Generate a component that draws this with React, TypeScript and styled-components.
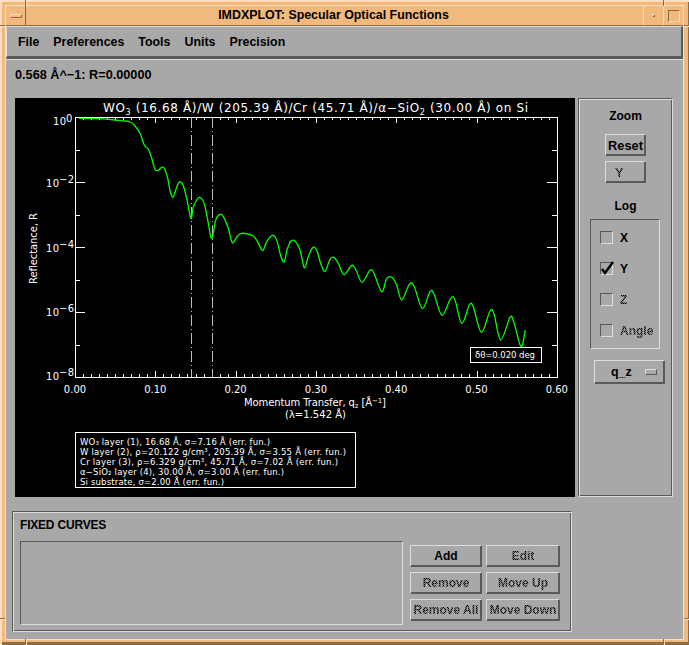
import styled, { createGlobalStyle } from "styled-components";

const GRAY = "#a8a8a8";
const LIGHT = "#dcdcdc";
const DARK = "#5a5a5a";
const ORANGE = "#f0b97e";
const ORANGE_LIGHT = "#ffdfbb";
const ORANGE_DARK = "#8c6b47";

const GlobalStyle = createGlobalStyle`
  html, body {
    margin: 0;
    padding: 0;
    background: ${GRAY};
  }
  * {
    box-sizing: border-box;
  }
`;

const Frame = styled.div`
  position: relative;
  width: 689px;
  height: 645px;
  padding: 5px;
  background: ${ORANGE};
  box-shadow: inset 2px 2px 0 ${ORANGE_LIGHT}, inset -1px -3px 0 ${ORANGE_DARK};
  font-family: "Liberation Sans", Arial, sans-serif;
  font-weight: 700;
  font-size: 12.4px;
  color: #000;
`;

const Notch = styled.div<{ $x: number; $y: number; $wide?: boolean }>`
  position: absolute;
  left: ${(p) => p.$x}px;
  top: ${(p) => p.$y}px;
  width: ${(p) => (p.$wide ? "5px" : "2px")};
  height: ${(p) => (p.$wide ? "2px" : "6px")};
  background: ${(p) =>
    p.$wide
      ? `linear-gradient(${ORANGE_DARK} 50%, ${ORANGE_LIGHT} 50%)`
      : `linear-gradient(90deg, ${ORANGE_DARK} 50%, ${ORANGE_LIGHT} 50%)`};
`;

const Window = styled.div`
  height: 100%;
  border: 1px solid ${ORANGE_LIGHT};
  display: flex;
  flex-direction: column;
`;

const TitleBar = styled.div`
  height: 20px;
  display: flex;
  flex-shrink: 0;
  border-bottom: 1px solid ${ORANGE_DARK};
`;

const WmButton = styled.div<{ $w: number }>`
  width: ${(p) => p.$w}px;
  display: flex;
  align-items: center;
  justify-content: center;
  flex-shrink: 0;
  border-left: 1px solid ${ORANGE_LIGHT};
  &:first-child {
    border-left: 0;
    border-right: 1px solid ${ORANGE_DARK};
  }
`;

const MenuGlyph = styled.div`
  width: 12px;
  height: 4px;
  background: ${ORANGE};
  border: 1px solid;
  border-color: ${ORANGE_LIGHT} ${ORANGE_DARK} ${ORANGE_DARK} ${ORANGE_LIGHT};
`;

const MinGlyph = styled.div`
  width: 3px;
  height: 3px;
  border: 1px solid;
  border-color: ${ORANGE_LIGHT} ${ORANGE_DARK} ${ORANGE_DARK} ${ORANGE_LIGHT};
`;

const MaxGlyph = styled.div`
  width: 12px;
  height: 12px;
  border: 1px solid;
  border-color: ${ORANGE_DARK} ${ORANGE_LIGHT} ${ORANGE_LIGHT} ${ORANGE_DARK};
`;

const TitleText = styled.div`
  flex: 1;
  text-align: center;
  line-height: 19px;
  padding-right: 2px;
`;

const Body = styled.div`
  flex: 1;
  background: ${GRAY};
  display: flex;
  flex-direction: column;
`;

const MenuBar = styled.div`
  height: 33px;
  flex-shrink: 0;
  display: flex;
  align-items: center;
  gap: 14px;
  padding-left: 11px;
  border-top: 1px solid ${LIGHT};
  border-left: 1px solid ${LIGHT};
  border-bottom: 3px solid ${DARK};
  border-right: 2px solid ${DARK};
`;

const Readout = styled.div`
  height: 39px;
  flex-shrink: 0;
  display: flex;
  align-items: center;
  padding: 0 0 8px 9px;
  font-size: 12.7px;
  border-top: 1px solid ${LIGHT};
`;

const MainRow = styled.div`
  display: flex;
  gap: 3px;
  height: 399px;
  margin-left: 9px;
  flex-shrink: 0;
`;

const Plot = styled.svg`
  display: block;
  width: 560px;
  height: 399px;
  background: #000;
  flex-shrink: 0;
`;

const PlotText = styled.text<{ $size?: number }>`
  fill: #fff;
  font-family: "DejaVu Sans", sans-serif;
  font-weight: 400;
  font-size: ${(p) => p.$size ?? 10}px;
`;

const Etched = styled.div`
  border: 1px solid;
  border-color: ${DARK} ${LIGHT} ${LIGHT} ${DARK};
  box-shadow: inset 1px 1px 0 ${LIGHT}, inset -1px -1px 0 ${DARK};
`;

const SidePanel = styled(Etched)`
  width: 95px;
  display: flex;
  flex-direction: column;
  align-items: center;
  padding-top: 9px;
`;

const SideLabel = styled.div<{ $top?: number }>`
  height: 16px;
  line-height: 16px;
  font-size: 12px;
  margin-top: ${(p) => p.$top ?? 0}px;
`;

const Button = styled.div<{ $w: number; $top?: number; $left?: boolean }>`
  width: ${(p) => p.$w}px;
  height: 22px;
  margin-top: ${(p) => p.$top ?? 0}px;
  display: flex;
  align-items: center;
  justify-content: ${(p) => (p.$left ? "flex-start" : "center")};
  padding-left: ${(p) => (p.$left ? "9px" : "0")};
  overflow: hidden;
  white-space: nowrap;
  flex-shrink: 0;
  border: 1px solid;
  border-color: ${LIGHT} ${DARK} ${DARK} ${LIGHT};
  box-shadow: inset -1px -1px 0 ${DARK};
`;

const SideButton = styled(Button)`
  font-size: 12.8px;
`;

const Dim = styled.span`
  color: transparent;
  background: repeating-conic-gradient(#000 0 25%, #6e6e6e 0 50%) 0 0 / 2px 2px;
  -webkit-background-clip: text;
  background-clip: text;
`;

const LogBox = styled.div`
  width: 70px;
  height: 130px;
  margin: 5px 1px 0 0;
  padding: 2px 0 0 9px;
  flex-shrink: 0;
  font-size: 12px;
  border: 1px solid;
  border-color: ${DARK} ${LIGHT} ${LIGHT} ${DARK};
`;

const LogRow = styled.div`
  height: 31px;
  display: flex;
  align-items: center;
  gap: 7px;
`;

const CheckBox = styled.div`
  position: relative;
  width: 13px;
  height: 13px;
  border: 1px solid;
  border-color: ${DARK} ${LIGHT} ${LIGHT} ${DARK};
`;

const CheckMark = styled.svg`
  position: absolute;
  left: -1px;
  top: -2px;
  width: 14px;
  height: 14px;
`;

const Select = styled.div`
  width: 71px;
  height: 24px;
  margin: 11px 0 0 8px;
  flex-shrink: 0;
  display: flex;
  align-items: center;
  padding-left: 16px;
  gap: 13px;
  border: 1px solid;
  border-color: ${LIGHT} ${DARK} ${DARK} ${LIGHT};
  box-shadow: inset -1px -1px 0 ${DARK};
`;

const SelectGlyph = styled.div`
  width: 12px;
  height: 6px;
  border: 1px solid;
  border-color: ${LIGHT} ${DARK} ${DARK} ${LIGHT};
`;

const CurvesPanel = styled(Etched)`
  width: 560px;
  height: 121px;
  margin: 14px 0 0 6px;
  padding: 1px 7px;
  flex-shrink: 0;
`;

const CurvesTitle = styled.div`
  height: 28px;
  line-height: 24px;
  font-size: 12px;
  letter-spacing: -0.2px;
`;

const CurvesRow = styled.div`
  display: flex;
  gap: 7px;
`;

const ListBox = styled.div`
  width: 383px;
  height: 84px;
  border: 1px solid;
  border-color: ${DARK} ${LIGHT} ${LIGHT} ${DARK};
`;

const ButtonGrid = styled.div`
  display: grid;
  grid-template-columns: 72px 74px;
  grid-auto-rows: 22px;
  column-gap: 4px;
  row-gap: 5px;
  margin-top: 4px;
  font-size: 12px;
`;

const LEFT = 75;
const RIGHT = 557;
const TOP = 117;
const BOTTOM = 377;
const X_STEP = (RIGHT - LEFT) / 60;
const DECADE = (BOTTOM - TOP) / 8;

const zoomA = [
  [192, 55], [250, 56], [300, 60], [345, 66], [360, 78], [375, 100], [388, 135], [400, 148], [410, 175],
  [420, 208], [430, 211], [440, 202], [448, 205], [458, 235], [466, 275], [474, 292], [482, 270], [490, 250],
  [498, 246], [506, 260], [516, 300], [528, 355], [534, 325], [545, 300], [555, 292], [568, 312], [578, 360],
  [588, 412], [594, 405], [602, 360], [615, 343], [625, 350], [640, 385], [652, 428], [665, 412], [680, 400],
  [715, 408], [730, 430], [743, 452], [755, 425], [772, 406], [785, 420], [798, 470], [808, 485], [816, 450],
  [826, 425],
];

const zoomB = [
  [0, 127], [12, 121], [30, 150], [43, 203], [55, 170], [68, 143], [80, 150], [92, 190], [105, 214], [120, 178],
  [132, 172], [145, 190], [162, 224], [185, 196], [198, 210], [216, 247], [240, 211], [252, 220], [275, 275],
  [290, 236], [305, 232], [320, 255], [335, 300], [358, 253], [372, 258], [397, 325], [420, 275], [432, 282],
  [456, 346], [482, 295], [495, 300], [515, 370], [538, 315], [550, 320], [574, 397], [600, 333], [612, 342],
  [632, 420], [660, 352], [672, 368], [693, 440], [706, 390],
];

const curvePoints = [
  ...zoomA.map(([x, y]) => [15 + x / 3, 100 + y / 3]),
  ...zoomB.map(([x, y]) => [290 + x / 3, 200 + y / 3]),
];

// catmull-rom through the traced points, so the humps come out round
const smoothPath = (pts: number[][]) => {
  let d = `M${pts[0][0].toFixed(1)} ${pts[0][1].toFixed(1)}`;
  for (let i = 0; i < pts.length - 1; i++) {
    const p0 = pts[Math.max(i - 1, 0)];
    const p1 = pts[i];
    const p2 = pts[i + 1];
    const p3 = pts[Math.min(i + 2, pts.length - 1)];
    const c1x = p1[0] + (p2[0] - p0[0]) / 6;
    const c1y = p1[1] + (p2[1] - p0[1]) / 6;
    const c2x = p2[0] - (p3[0] - p1[0]) / 6;
    const c2y = p2[1] - (p3[1] - p1[1]) / 6;
    d += `C${c1x.toFixed(1)} ${c1y.toFixed(1)} ${c2x.toFixed(1)} ${c2y.toFixed(1)} ${p2[0].toFixed(1)} ${p2[1].toFixed(1)}`;
  }
  return d;
};

const layerLines = [
  { y: 445, w: 190, text: "WO₃ layer (1), 16.68 Å, σ=7.16 Å (err. fun.)" },
  { y: 455, w: 266, text: "W layer (2), ρ=20.122 g/cm³, 205.39 Å, σ=3.55 Å (err. fun.)" },
  { y: 465, w: 258, text: "Cr layer (3), ρ=6.329 g/cm³, 45.71 Å, σ=7.02 Å (err. fun.)" },
  { y: 475, w: 204, text: "α−SiO₂ layer (4), 30.00 Å, σ=3.00 Å (err. fun.)" },
  { y: 485, w: 144, text: "Si substrate, σ=2.00 Å (err. fun.)" },
];

const Chart = () => {
  const xTicks = Array.from({ length: 61 }, (_, i) => i);
  const yTicks = Array.from({ length: 9 }, (_, i) => i);
  return (
    <Plot viewBox="15 98 560 399">
      <g stroke="#fff" strokeWidth="1" fill="none" shapeRendering="crispEdges">
        <rect x={LEFT + 0.5} y={TOP + 0.5} width={RIGHT - LEFT} height={BOTTOM - TOP} />
        {xTicks.map((i) => {
          const x = Math.round(LEFT + i * X_STEP) + 0.5;
          const len = i % 10 === 0 ? 6 : 3;
          return (
            <g key={i}>
              <line x1={x} x2={x} y1={TOP} y2={TOP + len} />
              <line x1={x} x2={x} y1={BOTTOM} y2={BOTTOM - len} />
            </g>
          );
        })}
        {yTicks.map((i) => {
          const y = Math.round(TOP + i * DECADE) + 0.5;
          const len = i % 2 === 0 ? 10 : 5;
          return (
            <g key={i}>
              <line x1={LEFT} x2={LEFT + len} y1={y} y2={y} />
              <line x1={RIGHT} x2={RIGHT - len} y1={y} y2={y} />
            </g>
          );
        })}
        <rect x="470.5" y="347.5" width="71" height="15" fill="#000" />
        <rect x="75.5" y="432.5" width="280" height="55" />
      </g>
      <g stroke="#bdbdbd" strokeWidth="1" strokeDasharray="11 3 1 3" shapeRendering="crispEdges">
        <line x1="191.5" x2="191.5" y1={TOP} y2={BOTTOM} />
        <line x1="212.5" x2="212.5" y1={TOP} y2={BOTTOM} />
      </g>
      <path d={smoothPath(curvePoints)} fill="none" stroke="#00ff00" strokeWidth="1.3" />

      <PlotText x="103" y="112" $size={12} textLength={425}>
        WO<tspan dy="3" fontSize="8">3</tspan>
        <tspan dy="-3"> (16.68 Å)/W (205.39 Å)/Cr (45.71 Å)/α−SiO</tspan>
        <tspan dy="3" fontSize="8">2</tspan>
        <tspan dy="-3"> (30.00 Å) on Si</tspan>
      </PlotText>

      <PlotText x="53" y="125" textLength={13}>10</PlotText>
      <PlotText x="66" y="122" textLength={7}>0</PlotText>
      {[
        { y: 187, e: "−2" },
        { y: 252, e: "−4" },
        { y: 316, e: "−6" },
        { y: 380, e: "−8" },
      ].map((t) => (
        <g key={t.e}>
          <PlotText x="46" y={t.y} textLength={13}>10</PlotText>
          <PlotText x="59" y={t.y - 4} textLength={15}>{t.e}</PlotText>
        </g>
      ))}

      {[0, 1, 2, 3, 4, 5, 6].map((i) => (
        <PlotText key={i} x={LEFT + i * 80.3} y="393" textAnchor="middle">
          {`0.${i}0`}
        </PlotText>
      ))}

      <PlotText x="244" y="406" $size={10} textLength={142}>
        Momentum Transfer, q<tspan dy="2" fontSize="7">z</tspan>
        <tspan dy="-2"> [Å</tspan>
        <tspan dy="-3" fontSize="7">−1</tspan>
        <tspan dy="3">]</tspan>
      </PlotText>
      <PlotText x="285" y="418" $size={10} textLength={61}>(λ=1.542 Å)</PlotText>
      <PlotText transform="translate(37 284) rotate(-90)" $size={10} textLength={71}>Reflectance, R</PlotText>
      <PlotText x="475" y="358" $size={8.5} textLength={60}>δθ=0.020 deg</PlotText>

      {layerLines.map((l) => (
        <PlotText key={l.y} x="80" y={l.y} $size={8.5} textLength={l.w}>
          {l.text}
        </PlotText>
      ))}
    </Plot>
  );
};

const App = () => {
  return (
    <>
      <GlobalStyle />
      <Frame>
        <Notch $x={25} $y={0} />
        <Notch $x={663} $y={0} />
        <Notch $x={25} $y={639} />
        <Notch $x={663} $y={639} />
        <Notch $x={0} $y={25} $wide />
        <Notch $x={684} $y={25} $wide />
        <Notch $x={0} $y={618} $wide />
        <Notch $x={684} $y={618} $wide />
        <Window>
          <TitleBar>
            <WmButton $w={20}>
              <MenuGlyph />
            </WmButton>
            <TitleText>IMDXPLOT: Specular Optical Functions</TitleText>
            <WmButton $w={20}>
              <MinGlyph />
            </WmButton>
            <WmButton $w={20}>
              <MaxGlyph />
            </WmButton>
          </TitleBar>
          <Body>
            <MenuBar>
              <span>File</span>
              <span>Preferences</span>
              <span>Tools</span>
              <span>Units</span>
              <span>Precision</span>
            </MenuBar>
            <Readout>0.568 Å^−1: R=0.00000</Readout>
            <MainRow>
              <Chart />
              <SidePanel>
                <SideLabel>Zoom</SideLabel>
                <SideButton $w={41} $top={10}>Reset</SideButton>
                <SideButton $w={41} $top={5} $left>
                  <Dim>Y</Dim>
                </SideButton>
                <SideLabel $top={15}>Log</SideLabel>
                <LogBox>
                  <LogRow>
                    <CheckBox />
                    <span>X</span>
                  </LogRow>
                  <LogRow>
                    <CheckBox>
                      <CheckMark viewBox="0 0 14 14">
                        <path d="M2 8 L5 12 L13 1" fill="none" stroke="#000" strokeWidth="2.4" />
                      </CheckMark>
                    </CheckBox>
                    <span>Y</span>
                  </LogRow>
                  <LogRow>
                    <CheckBox />
                    <Dim>Z</Dim>
                  </LogRow>
                  <LogRow>
                    <CheckBox />
                    <Dim>Angle</Dim>
                  </LogRow>
                </LogBox>
                <Select>
                  <span>q_z</span>
                  <SelectGlyph />
                </Select>
              </SidePanel>
            </MainRow>
            <CurvesPanel>
              <CurvesTitle>FIXED CURVES</CurvesTitle>
              <CurvesRow>
                <ListBox />
                <ButtonGrid>
                  <Button $w={72}>Add</Button>
                  <Button $w={74}>
                    <Dim>Edit</Dim>
                  </Button>
                  <Button $w={72}>
                    <Dim>Remove</Dim>
                  </Button>
                  <Button $w={74}>
                    <Dim>Move Up</Dim>
                  </Button>
                  <Button $w={72}>
                    <Dim>Remove All</Dim>
                  </Button>
                  <Button $w={74}>
                    <Dim>Move Down</Dim>
                  </Button>
                </ButtonGrid>
              </CurvesRow>
            </CurvesPanel>
          </Body>
        </Window>
      </Frame>
    </>
  );
};

export default App;
